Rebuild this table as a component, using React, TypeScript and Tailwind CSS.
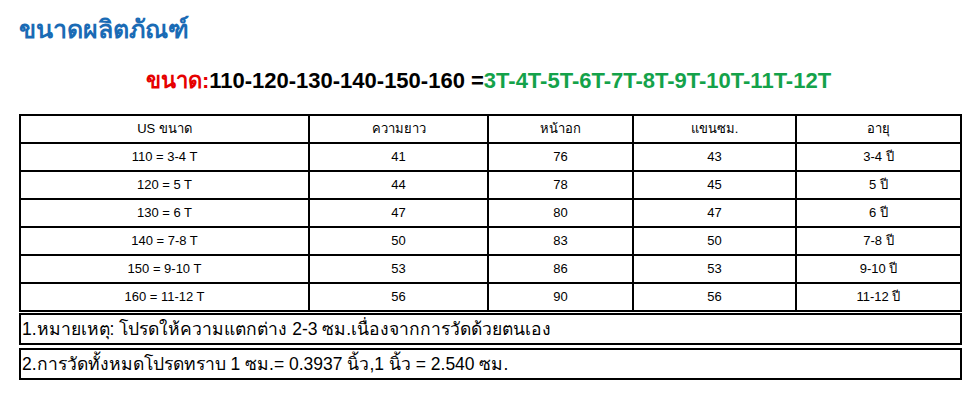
const rows = [
  ['110 = 3-4 T', '41', '76', '43', '3-4 ปี'],
  ['120 = 5 T', '44', '78', '45', '5 ปี'],
  ['130 = 6 T', '47', '80', '47', '6 ปี'],
  ['140 = 7-8 T', '50', '83', '50', '7-8 ปี'],
  ['150 = 9-10 T', '53', '86', '53', '9-10 ปี'],
  ['160 = 11-12 T', '56', '90', '56', '11-12 ปี'],
];

const headers = ['US ขนาด', 'ความยาว', 'หน้าอก', 'แขนซม.', 'อายุ'];

export default function App() {
  return (
    <div className="w-[977px] h-[400px] bg-white px-[19px] pt-[13px] font-['Tahoma','Liberation_Sans','Noto_Sans',sans-serif] text-black">
      <h1 className="text-[25px] font-bold leading-[32px] text-[#1a6bb5]">ขนาดผลิตภัณฑ์</h1>

      <p className="mt-[23px] text-center text-[22px] font-bold leading-[26px]">
        <span className="text-[#e60000]">ขนาด:</span>
        <span>110-120-130-140-150-160 =</span>
        <span className="text-[#14a24a]">3T-4T-5T-6T-7T-8T-9T-10T-11T-12T</span>
      </p>

      {/* size table */}
      <div className="mt-[20px] w-[943px] grid grid-cols-[287px_177px_143px_161px_163px] gap-[2px] p-[2px] bg-black">
        {headers.map((h) => (
          <div key={h} className="h-[26px] bg-white flex items-center justify-center text-[13px]">
            {h}
          </div>
        ))}
        {rows.map((r) =>
          r.map((c, i) => (
            <div key={r[0] + i} className="h-[26px] bg-white flex items-center justify-center text-[13px]">
              {c}
            </div>
          ))
        )}
      </div>

      {/* notes */}
      <div className="w-[943px] mt-[1px] flex flex-col gap-[3px]">
        <div className="h-[32px] border-2 border-black flex items-center pl-[1px] text-[17.5px]">
          1.หมายเหตุ: โปรดให้ความแตกต่าง 2-3 ซม.เนื่องจากการวัดด้วยตนเอง
        </div>
        <div className="h-[32px] border-2 border-black flex items-center pl-[1px] text-[17.5px]">
          2.การวัดทั้งหมดโปรดทราบ 1 ซม.= 0.3937 นิ้ว,1 นิ้ว = 2.540 ซม.
        </div>
      </div>
    </div>
  );
}
